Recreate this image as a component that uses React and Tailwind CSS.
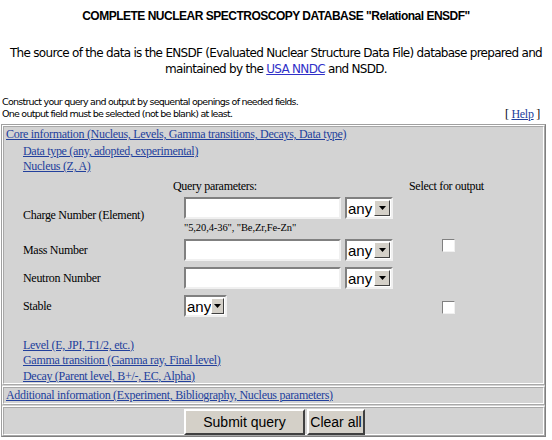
import React from 'react';

const serif = { fontFamily: '"Liberation Serif", "Times New Roman", serif' };

function TextBox({ w = 'w-[157px]' }) {
  return (
    <div className={`${w} h-[22px] bg-white border-2 border-t-[#808080] border-l-[#808080] border-b-[#f0f0f0] border-r-[#f0f0f0]`} />
  );
}

function AnySelect({ w = 'w-[48px]' }) {
  return (
    <div className={`${w} h-[22px] bg-white border-2 border-t-[#808080] border-l-[#808080] border-b-[#f0f0f0] border-r-[#f0f0f0] flex items-center justify-between`}>
      <span className="pl-[1px] text-[15px] leading-none text-black tracking-normal font-['Liberation_Sans',Arial,sans-serif]">any</span>
      <span className="w-[16px] h-[16px] mr-[1px] bg-[#d4d0c8] border border-t-white border-l-white border-b-[#404040] border-r-[#404040] flex items-center justify-center">
        <svg width="7" height="4" viewBox="0 0 7 4"><path d="M0 0h7L3.5 4z" fill="#000" /></svg>
      </span>
    </div>
  );
}

function Check() {
  return <div className="w-[13px] h-[13px] bg-white border border-t-[#808080] border-l-[#808080] border-b-[#f0f0f0] border-r-[#f0f0f0]" />;
}

function Link({ children }) {
  return <a href="#" className="text-[#22409c] underline">{children}</a>;
}

const outset = 'border border-t-white border-l-white border-b-[#a8a8a8] border-r-[#a8a8a8]';
const inset = 'border border-t-[#a8a8a8] border-l-[#a8a8a8] border-b-white border-r-white';

export default function App() {
  return (
    <div className="w-[552px] h-[440px] bg-white overflow-hidden text-black">
      <div className="pt-[7px] text-center font-bold text-[12px] font-['Liberation_Sans',Arial,sans-serif] tracking-[-0.5px]">
        COMPLETE NUCLEAR SPECTROSCOPY DATABASE "Relational ENSDF"
      </div>
      <div className="mt-[20px] text-center text-[12px] leading-[16px] font-['DejaVu_Sans',Verdana,sans-serif] tracking-[-0.7px]">
        The source of the data is the ENSDF (Evaluated Nuclear Structure Data File) database prepared and<br />
        maintained by the <a href="#" className="text-[#3030c8] underline">USA NNDC</a> and NSDD.
      </div>
      <div className="mt-[19px] px-[2px] flex justify-between items-end text-[9.5px] leading-[12px] font-['DejaVu_Sans',Verdana,sans-serif] tracking-[-0.75px]">
        <div>
          Construct your query and output by sequental openings of needed fields.<br />
          One output field must be selected (not be blank) at least.
        </div>
        <div className="pr-[10px] text-[12px] tracking-[-0.3px]" style={serif}>
          [ <Link>Help</Link> ]
        </div>
      </div>

      <div className="mt-[4px] ml-[1px] w-[545px] bg-[#d3d3d3] border border-t-[#a0a0a0] border-l-[#a0a0a0] border-b-[#808080] border-r-[#808080] text-[12px] leading-[15px] tracking-[-0.3px]" style={serif}>
        <div className={outset}>
          <div className={`h-[258px] ${inset}`}>
            <div className="pl-[2px] pb-[2px]"><Link>Core information (Nucleus, Levels, Gamma transitions, Decays, Data type)</Link></div>
            <div className="pl-[19px]">
              <div><Link>Data type (any, adopted, experimental)</Link></div>
              <div><Link>Nucleus (Z, A)</Link></div>
            </div>
            <div className="grid grid-cols-[169px_236px_1fr] mt-[5px]">
              <div />
              <div>Query parameters:</div>
              <div>Select for output</div>
            </div>
            <div className="grid grid-cols-[180px_258px_1fr] items-center mt-[3px]">
              <div className="pl-[19px]">Charge Number (Element)</div>
              <div>
                <div className="flex gap-[4px]"><TextBox /><AnySelect /></div>
                <div className="text-[10.5px] leading-[11px] mt-[3px] tracking-[-0.1px]">"5,20,4-36", "Be,Zr,Fe-Zn"</div>
              </div>
              <div />
            </div>
            <div className="grid grid-cols-[180px_258px_1fr] items-center mt-[6px]">
              <div className="pl-[19px]">Mass Number</div>
              <div className="flex gap-[4px]"><TextBox /><AnySelect /></div>
              <div className="self-start"><Check /></div>
            </div>
            <div className="grid grid-cols-[180px_258px_1fr] items-center mt-[6px]">
              <div className="pl-[19px]">Neutron Number</div>
              <div className="flex gap-[4px]"><TextBox /><AnySelect /></div>
              <div />
            </div>
            <div className="grid grid-cols-[180px_258px_1fr] items-center mt-[6px]">
              <div className="pl-[19px]">Stable</div>
              <div className="flex"><AnySelect w="w-[43px]" /></div>
              <div className="pt-[3px]"><Check /></div>
            </div>
            <div className="pl-[19px] mt-[21px]">
              <div><Link>Level (E, JPI, T1/2, etc.)</Link></div>
              <div><Link>Gamma transition (Gamma ray, Final level)</Link></div>
              <div className="mt-[1px]"><Link>Decay (Parent level, B+/-, EC, Alpha)</Link></div>
            </div>
          </div>
        </div>
        <div className={`mt-[1px] ${outset}`}>
          <div className={`h-[17px] pl-[2px] ${inset}`}>
            <Link>Additional information (Experiment, Bibliography, Nucleus parameters)</Link>
          </div>
        </div>
        <div className={`mt-[1px] ${outset}`}>
          <div className={`h-[28px] pt-[1px] pl-[180px] flex gap-[2px] ${inset}`}>
            <button className="w-[121px] h-[26px] bg-[#d4d0c8] border-2 border-t-white border-l-white border-b-[#404040] border-r-[#404040] text-[14px] tracking-normal font-['Liberation_Sans',Arial,sans-serif]">Submit query</button>
            <button className="w-[58px] h-[26px] bg-[#d4d0c8] border-2 border-t-white border-l-white border-b-[#404040] border-r-[#404040] text-[14px] tracking-normal font-['Liberation_Sans',Arial,sans-serif]">Clear all</button>
          </div>
        </div>
      </div>
    </div>
  );
}
